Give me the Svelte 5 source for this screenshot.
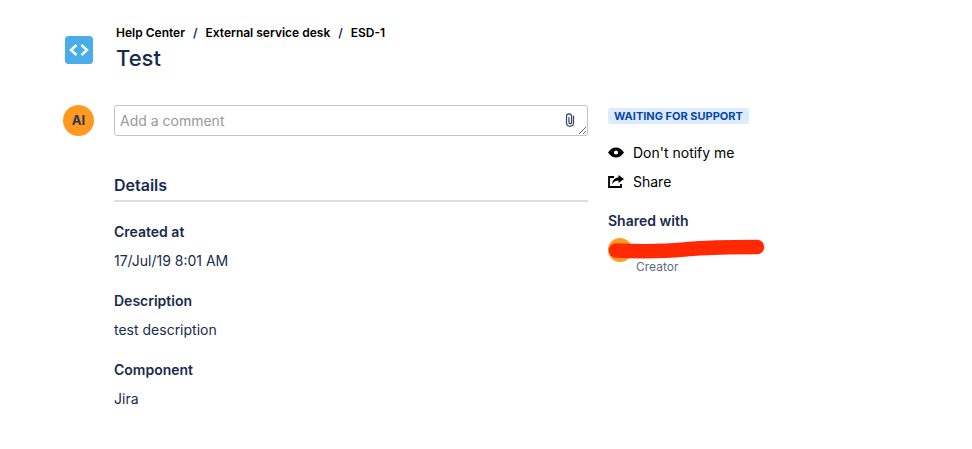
<script lang="ts">
  interface Field {
    label: string;
    value: string;
  }

  const crumbs: string[] = ['Help Center', 'External service desk', 'ESD-1'];

  const fields: Field[] = [
    { label: 'Created at', value: '17/Jul/19 8:01 AM' },
    { label: 'Description', value: 'test description' },
    { label: 'Component', value: 'Jira' }
  ];

  let comment = $state('');
</script>

<div class="page">
  <header class="request-header">
    <svg class="request-icon" viewBox="0 0 28 28" aria-hidden="true">
      <rect width="28" height="28" rx="3.5" fill="#4bade8" />
      <path d="M11.5 9 6 14l5.500 5M16.500 9l5.500 5-5.500 5" fill="none" stroke="#fff" stroke-width="2.4" />
    </svg>
    <div>
      <nav class="breadcrumbs" aria-label="Breadcrumbs">
        {#each crumbs as crumb, i}
          {#if i > 0}<span class="separator">/</span>{/if}
          <a href="#top">{crumb}</a>
        {/each}
      </nav>
      <h1>Test</h1>
    </div>
  </header>

  <div class="columns">
    <div class="avatar">AI</div>

    <main>
      <div class="comment-box">
        <textarea aria-label="Add a comment" placeholder="Add a comment" rows="1" bind:value={comment}></textarea>
        <button class="attach" aria-label="Attach a file">
          <svg viewBox="0 0 10 16" width="10" height="14" fill="none" stroke="#344563" stroke-width="1.4" stroke-linecap="round">
            <path d="M9 3.5V11a4 4 0 0 1-8 0V4a2.800 2.800 0 0 1 5.800 0v6.600a1.500 1.500 0 0 1-3 0V5" />
          </svg>
        </button>
      </div>

      <h2>Details</h2>
      <dl>
        {#each fields as field}
          <dt>{field.label}</dt>
          <dd>{field.value}</dd>
        {/each}
      </dl>
    </main>

    <aside>
      <span class="status">Waiting for support</span>

      <div class="actions">
        <button>
          <svg viewBox="0 0 16 14" width="16" height="14" aria-hidden="true">
            <path fill-rule="evenodd" d="M0 6.5C2 3.4 4.8 1.5 8 1.5s6 1.9 8 5c-2 3.1-4.800 5-8 5s-6-1.900-8-5zM8 4.400a2.100 2.100 0 1 0 0 4.200 2.100 2.100 0 0 0 0-4.200z" />
          </svg>
          Don't notify me
        </button>
        <button>
          <svg viewBox="0 0 16 14" width="16" height="14" aria-hidden="true">
            <path d="M6 2H1v10h12V9" fill="none" stroke="#000" stroke-width="1.8" />
            <path d="M10.5 0 16 4l-5.500 4V5.500C8 5.500 6 6.500 4.200 9 4.500 5 7 2.500 10.500 2.500z" />
          </svg>
          Share
        </button>
      </div>

      <h3>Shared with</h3>
      <div class="person">
        <div class="person-avatar"></div>
        <span>Creator</span>
        <svg class="redaction" viewBox="0 0 157 20" width="157" height="20" aria-hidden="true">
          <path d="M8 11.500C32 12.500 60 12 76 10.500S100 8 149 8" fill="none" stroke="#ff2a04" stroke-width="14.500" stroke-linecap="round" />
        </svg>
      </div>
    </aside>
  </div>
</div>

<style>
  :global(body) {
    background: #fff;
  }

  .page {
    padding: 24px 63px 40px;
    font-family: Inter, 'Liberation Sans', sans-serif;
    font-size: 14px;
    line-height: 20px;
    color: #172b4d;
  }

  .request-header {
    display: grid;
    grid-template-columns: 53px 1fr;
    align-items: end;
    margin-bottom: 31px;
  }

  .request-icon {
    width: 28px;
    height: 28px;
    margin: 0 0 10px 2px;
  }

  .breadcrumbs {
    display: flex;
    gap: 8px;
    font-size: 12px;
    line-height: 18px;
    font-weight: 600;
  }

  .breadcrumbs a {
    color: #000;
    text-decoration: none;
  }

  h1 {
    margin: 0;
    font-size: 22px;
    line-height: 32px;
    font-weight: 500;
  }

  .columns {
    display: grid;
    grid-template-columns: 51px 1fr 321px;
    align-items: start;
  }

  .avatar {
    width: 31px;
    height: 31px;
    border-radius: 50%;
    background: #ff991f;
    color: #253858;
    font-size: 13px;
    line-height: 31px;
    font-weight: 700;
    text-align: center;
  }

  .comment-box {
    position: relative;
    display: flex;
  }

  textarea {
    box-sizing: border-box;
    width: 100%;
    height: 31px;
    padding: 5px 32px 4px 5px;
    border: 1px solid #c4c4c4;
    border-radius: 3px;
    font: inherit;
    color: inherit;
    resize: vertical;
    overflow: hidden;
  }

  textarea::placeholder {
    color: #999;
  }

  .attach {
    position: absolute;
    top: 8px;
    right: 13px;
    display: flex;
    padding: 0;
    border: 0;
    background: none;
  }

  h2 {
    margin: 37px 0 20px;
    padding-bottom: 3px;
    border-bottom: 2px solid #ddd;
    font-size: 16px;
    line-height: 24px;
    font-weight: 600;
  }

  dl {
    margin: 0;
  }

  dt {
    font-weight: 600;
  }

  dd {
    margin: 9px 0 20px;
  }

  aside {
    padding: 3px 0 0 20px;
  }

  .status {
    display: block;
    width: max-content;
    padding: 0 6px;
    border-radius: 3px;
    background: #deebff;
    color: #0747a6;
    font-size: 11px;
    line-height: 16px;
    font-weight: 700;
    text-transform: uppercase;
  }

  .actions {
    display: grid;
    gap: 9px;
    margin: 19px 0;
  }

  .actions button {
    display: flex;
    align-items: center;
    gap: 9px;
    padding: 0;
    border: 0;
    background: none;
    font: inherit;
    color: #000;
  }

  h3 {
    margin: 0;
    font-size: 14px;
    font-weight: 600;
  }

  .person {
    position: relative;
    display: flex;
    align-items: flex-end;
    gap: 4px;
    height: 44px;
    font-size: 12px;
    line-height: 16px;
    color: #5e6c84;
  }

  .person-avatar {
    align-self: flex-start;
    width: 24px;
    height: 24px;
    margin-top: 7px;
    border-radius: 50%;
    background: #ff991f;
  }

  .redaction {
    position: absolute;
    top: 8px;
    left: 0;
  }
</style>
